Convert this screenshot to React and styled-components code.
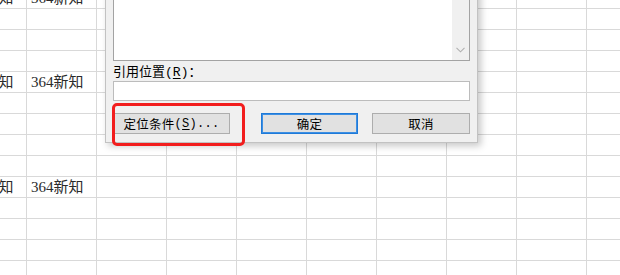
import React from "react";
import styled, { createGlobalStyle } from "styled-components";

const GlobalStyle = createGlobalStyle`
  html, body { margin: 0; padding: 0; background: #ffffff; overflow: hidden; }
  #root { width: 620px; height: 275px; }
`;

const Page = styled.div`
  position: relative;
  width: 620px;
  height: 275px;
  overflow: hidden;
  background: #ffffff;
`;

const Sheet = styled.div`
  display: grid;
  grid-template-columns: repeat(10, 70px);
  grid-auto-rows: 21px;
  margin-left: -43px;
  margin-top: -12px;
`;

const Cell = styled.div`
  box-sizing: border-box;
  border-right: 1px solid #d9d9d9;
  border-bottom: 1px solid #d9d9d9;
  padding-left: 4px;
  font-family: "Liberation Serif", "Noto Sans CJK SC", serif;
  font-size: 15px;
  line-height: 20px;
  color: #2b2b2b;
  white-space: nowrap;
  overflow: hidden;
`;

const Dialog = styled.div`
  position: absolute;
  left: 105px;
  top: -60px;
  width: 373px;
  box-sizing: border-box;
  background: #f0f0f0;
  border: 1px solid #c2c2c2;
  padding: 0 7px 8px 7px;
  box-shadow: 3px 3px 7px rgba(0, 0, 0, 0.22);
  font-family: "Noto Sans CJK SC", "Microsoft YaHei", sans-serif;
  color: #000;
`;

const ListBox = styled.div`
  display: flex;
  box-sizing: border-box;
  height: 120px;
  border: 1px solid #a3a3a3;
  background: #ffffff;
`;

const ListArea = styled.div`
  flex: 1;
`;

const ScrollTrack = styled.div`
  width: 17px;
  background: #f0f0f0;
  display: flex;
  flex-direction: column;
  justify-content: flex-end;
`;

const ScrollArrow = styled.div`
  height: 21px;
  display: flex;
  align-items: center;
  justify-content: center;
`;

const Label = styled.div`
  margin-top: 3px;
  font-size: 13px;
  line-height: 14px;
  height: 14px;
  white-space: nowrap;
`;

const Ascii = styled.span`
  font-family: "Liberation Mono", "DejaVu Sans Mono", monospace;
  font-size: ${(p) => p.$size || 13}px;
`;

const Mnemonic = styled.span`
  text-decoration: underline;
  text-underline-offset: 2px;
`;

const Input = styled.div`
  margin-top: 3px;
  box-sizing: border-box;
  height: 20px;
  background: #ffffff;
  border: 1px solid #bcbcbc;
`;

const ButtonRow = styled.div`
  display: flex;
  margin-top: 12px;
`;

const Button = styled.div`
  box-sizing: border-box;
  width: ${(p) => p.$w}px;
  margin-left: ${(p) => p.$gap || 0}px;
  height: 21px;
  display: flex;
  align-items: center;
  justify-content: center;
  background: #e1e1e1;
  border: 1px solid ${(p) => (p.$primary ? "#1f7ad8" : "#adadad")};
  box-shadow: ${(p) => (p.$primary ? "inset 0 0 0 1px #3d8fe3" : "none")};
  font-size: 12.5px;
  line-height: 14px;
  letter-spacing: 0.3px;
  white-space: nowrap;
  color: #000;
`;

const Highlight = styled.div`
  position: absolute;
  left: 112px;
  top: 103px;
  width: 133px;
  height: 43px;
  box-sizing: border-box;
  border: 3px solid #f21d1d;
  border-radius: 5px;
`;

const cellText = {
  "0-0": "364新知",
  "0-1": "364新知",
  "4-0": "364新知",
  "4-1": "364新知",
  "9-0": "364新知",
  "9-1": "364新知",
};

export default function App() {
  const rows = 14;
  const cols = 10;
  const cells = [];
  for (let r = 0; r < rows; r++) {
    for (let c = 0; c < cols; c++) {
      cells.push(<Cell key={`${r}-${c}`}>{cellText[`${r}-${c}`] || ""}</Cell>);
    }
  }
  return (
    <Page>
      <GlobalStyle />
      <Sheet>{cells}</Sheet>
      <Dialog>
        <ListBox>
          <ListArea />
          <ScrollTrack>
            <ScrollArrow>
              <svg width="9" height="6" viewBox="0 0 9 6">
                <path d="M0.5 0.8 L4.5 4.8 L8.5 0.8" fill="none" stroke="#b0b0b0" strokeWidth="1.1" />
              </svg>
            </ScrollArrow>
          </ScrollTrack>
        </ListBox>
        <Label>
          引用位置<Ascii>(<Mnemonic>R</Mnemonic>)</Ascii>：
        </Label>
        <Input />
        <ButtonRow>
          <Button $w={117}>
            定位条件<Ascii $size={12}>(<Mnemonic>S</Mnemonic>)...</Ascii>
          </Button>
          <Button $w={97} $gap={31} $primary>
            确定
          </Button>
          <Button $w={98} $gap={14}>
            取消
          </Button>
        </ButtonRow>
      </Dialog>
      <Highlight />
    </Page>
  );
}
